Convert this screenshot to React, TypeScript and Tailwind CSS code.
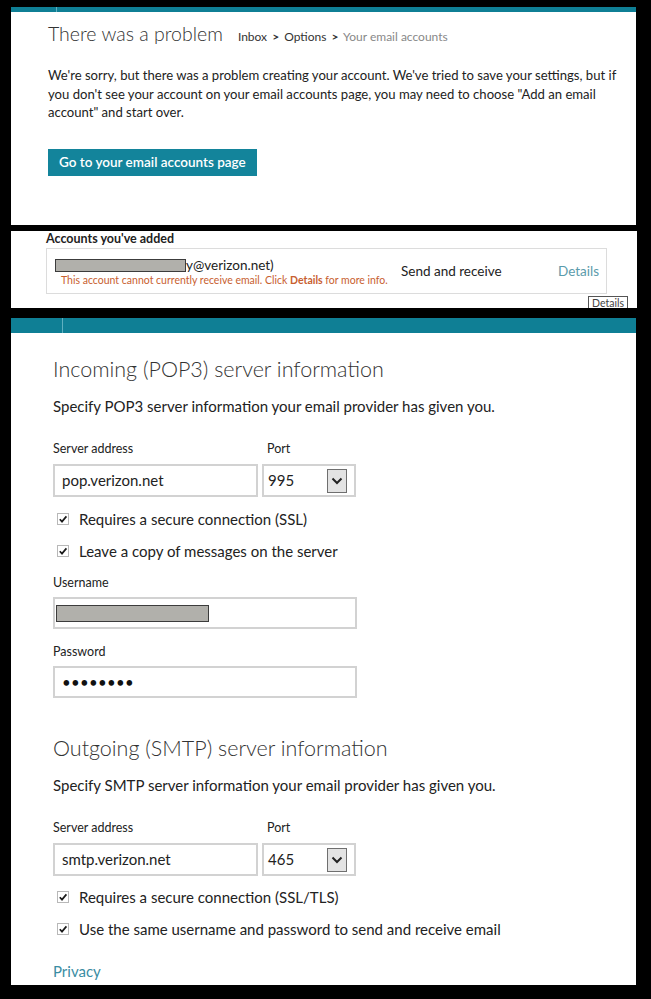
const Check = () => (
	<span className="flex h-[12px] w-[12px] shrink-0 items-center justify-center border border-[#b8b8b8] bg-white">
		<svg width="10" height="10" viewBox="0 0 10 10">
			<path d="M1.8 5.2 L4 7.6 L8.4 2.4" fill="none" stroke="#1a1a1a" strokeWidth="1.7" />
		</svg>
	</span>
);

const CheckRow = ({ label, className }: { label: string; className: string }) => (
	<div className={`flex items-center gap-[10px] pl-[4px] text-[15px] leading-[20px] text-[#222] ${className}`}>
		<Check />
		<span>{label}</span>
	</div>
);

const PortSelect = ({ value }: { value: string }) => (
	<div className="flex h-[33px] w-[94px] items-center justify-between border-2 border-[#d2d2d2] pl-[4px] pr-[7px] text-[15px] text-[#222]">
		<span>{value}</span>
		<span className="flex h-[24px] w-[20px] items-center justify-center border border-[#6f6f6f] bg-[#e3e3e3]">
			<svg width="12" height="8" viewBox="0 0 12 8">
				<path d="M1.5 1.5 L6 6 L10.5 1.5" fill="none" stroke="#222" strokeWidth="2" />
			</svg>
		</span>
	</div>
);

const ServerFields = ({ host, port }: { host: string; port: string }) => (
	<>
		<div className="flex">
			<p className="w-[214px] text-[12.5px] leading-[16px] text-[#222]">Server address</p>
			<p className="text-[12.5px] leading-[16px] text-[#222]">Port</p>
		</div>
		<div className="mt-[7px] flex gap-[4px]">
			<div className="flex h-[33px] w-[205px] items-center border-2 border-[#d2d2d2] pl-[7px] text-[15px] text-[#222]">
				{host}
			</div>
			<PortSelect value={port} />
		</div>
	</>
);

const App = () => {
	return (
		<div className="min-h-[999px] w-[651px] bg-black pt-[7px] pl-[11px] font-[Lato,sans-serif]">
			{/* problem panel */}
			<section className="w-[625px]">
				<div className="flex h-[5px] bg-[#0f7f95]">
					<div className="w-[46px] border-r border-[#5fb0c0]"></div>
				</div>
				<div className="h-[213px] bg-white pt-[8px] pl-[37px]">
					<div className="flex items-baseline">
						<h1 className="text-[19.5px] font-light leading-[28px] text-[#333]">There was a problem</h1>
						<p className="ml-[15px] text-[12px] text-[#333]">
							Inbox <b className="mx-[2px]">&gt;</b> Options <b className="mx-[2px]">&gt;</b>{" "}
							<span className="text-[#888]">Your email accounts</span>
						</p>
					</div>
					<p className="mt-[18px] whitespace-nowrap text-[13.1px] leading-[18.5px] text-[#222]">
						We're sorry, but there was a problem creating your account. We've tried to save your settings, but if
						<br />
						you don't see your account on your email accounts page, you may need to choose "Add an email
						<br />
						account" and start over.
					</p>
					<button className="mt-[27px] h-[27px] w-[209px] bg-[#13849b] pl-[11px] text-left text-[13.5px] font-semibold text-white">
						Go to your email accounts page
					</button>
				</div>
			</section>

			{/* accounts panel */}
			<section className="relative mt-[6px] h-[77px] w-[626px] overflow-hidden bg-white pl-[35px]">
				<p className="text-[12.5px] font-bold leading-[15px] text-[#222]">Accounts you've added</p>
				<div className="mt-[2px] flex h-[46px] w-[561px] items-center border border-[#dcdcdc] pl-[8px]">
					<div className="w-[346px] pt-[2px]">
						<div className="flex items-center text-[13.5px] leading-[16px] text-[#222]">
							<span className="h-[13px] w-[131px] border border-[#3c3c3c] bg-[#b1b0ab]"></span>
							<span>y@verizon.net)</span>
						</div>
						<p className="whitespace-nowrap pl-[6px] text-[10.5px] leading-[14px] text-[#c8602f]">
							This account cannot currently receive email. Click <b>Details</b> for more info.
						</p>
					</div>
					<span className="w-[157px] text-[13.5px] text-[#222]">Send and receive</span>
					<span className="text-[13.5px] text-[#5b9bab]">Details</span>
				</div>
				<span className="absolute left-[577px] top-[65px] border border-[#555] bg-white px-[3px] text-[10.5px] leading-[13px] text-[#444]">
					Details
				</span>
			</section>

			{/* server settings panel */}
			<section className="mt-[10px] w-[625px]">
				<div className="flex h-[15px] bg-[#0f7f95]">
					<div className="w-[52px] border-r border-[#5fb0c0]"></div>
				</div>
				<div className="h-[652px] bg-white pt-[21px] pl-[42px]">
					<h2 className="text-[21.5px] font-light leading-[30px] text-[#333]">Incoming (POP3) server information</h2>
					<p className="mt-[12px] text-[15px] leading-[20px] text-[#222]">
						Specify POP3 server information your email provider has given you.
					</p>
					<div className="mt-[25px]">
						<ServerFields host="pop.verizon.net" port="995" />
					</div>
					<CheckRow className="mt-[12px]" label="Requires a secure connection (SSL)" />
					<CheckRow className="mt-[12px]" label="Leave a copy of messages on the server" />

					<p className="mt-[14px] text-[12.5px] leading-[16px] text-[#222]">Username</p>
					<div className="mt-[6px] flex h-[32px] w-[304px] items-center border-2 border-[#d2d2d2] pl-[1px]">
						<span className="h-[17px] w-[153px] border border-[#3c3c3c] bg-[#b1b0ab]"></span>
					</div>
					<p className="mt-[15px] text-[12.5px] leading-[16px] text-[#222]">Password</p>
					<div className="mt-[6px] flex h-[32px] w-[304px] items-center border-2 border-[#d2d2d2] pl-[7px] text-[15px] tracking-[0.3px] text-[#111]">
						••••••••
					</div>

					<h2 className="mt-[35px] text-[21.5px] font-light leading-[30px] text-[#333]">Outgoing (SMTP) server information</h2>
					<p className="mt-[12px] text-[15px] leading-[20px] text-[#222]">
						Specify SMTP server information your email provider has given you.
					</p>
					<div className="mt-[25px]">
						<ServerFields host="smtp.verizon.net" port="465" />
					</div>
					<CheckRow className="mt-[11px]" label="Requires a secure connection (SSL/TLS)" />
					<CheckRow className="mt-[12px]" label="Use the same username and password to send and receive email" />

					<a className="mt-[22px] block text-[15px] leading-[20px] text-[#3a8da3]">Privacy</a>
				</div>
			</section>
		</div>
	);
};

export default App;
